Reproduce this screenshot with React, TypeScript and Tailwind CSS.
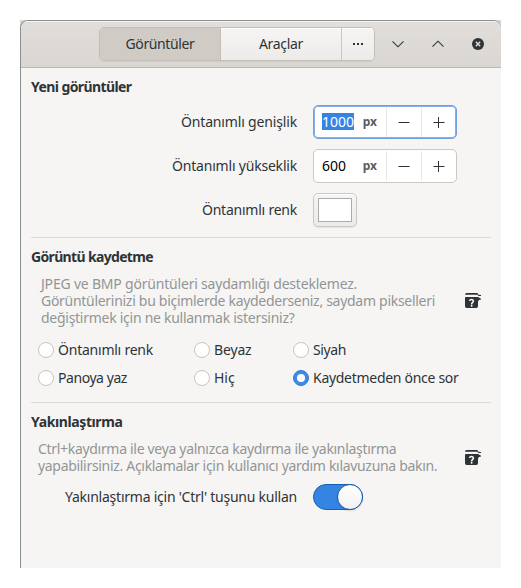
import type { ReactNode } from "react";

function HelpIcon({ className = "" }: { className?: string }) {
  return (
    <svg width="16" height="16" viewBox="0 0 16 16" className={"shrink-0 " + className}>
      <path d="M0 1.8Q0 0 1.6 0H12.4L13.4 1.7 16 2V3H13.4L12.4 1.7H1.4Z" fill="#2e3436" />
      <path d="M0 4.1Q.7 4.3 1.5 4.1H13L16 5.8V6.4L14 7 13 8.5V13.2Q13 15 11.3 15H1.7Q0 15 0 13.2Z" fill="#2e3436" />
      <path d="M4.6 8Q4.8 6.5 6.5 6.5T8.4 8.1Q8.4 9 7.4 9.7 6.6 10.2 6.6 11.4" fill="none" stroke="#f6f5f4" strokeWidth="1.6" />
      <rect x="5.8" y="12" width="1.6" height="1.7" fill="#f6f5f4" />
    </svg>
  );
}

function SpinButton({ value, active = false }: { value: string; active?: boolean }) {
  return (
    <div
      className={
        "flex h-[34px] w-36 overflow-hidden rounded-[5px] border bg-white " +
        (active ? "border-[#71a1dc] shadow-[inset_0_0_0_1px_#86b1e8]" : "border-[#cdc7c2]")
      }
    >
      <div className="flex w-[72px] items-center justify-between pr-[9px] pb-px pl-2">
        <span className={active ? "h-[17px] bg-[#3584e4] leading-[17px] text-white" : "leading-[17px] text-black"}>
          {value}
        </span>
        <span className="text-[12px] leading-[17px] font-bold text-[#585c5e]">px</span>
      </div>
      <div className="my-px flex w-[35px] items-center justify-center border-l border-[#eae8e6]">
        <svg width="12" height="12" viewBox="0 0 12 12"><path d="M0.5 6.5H11.5" stroke="#2e3436" /></svg>
      </div>
      <div className="my-px flex w-[35px] items-center justify-center border-l border-[#eae8e6]">
        <svg width="12" height="12" viewBox="0 0 12 12"><path d="M0.5 6.5H11.5M5.5 1V12" stroke="#2e3436" /></svg>
      </div>
    </div>
  );
}

function Radio({ checked = false, className, children }: { checked?: boolean; className: string; children: ReactNode }) {
  return (
    <div className={"flex h-4 items-center gap-1 " + className}>
      {checked ? (
        <span className="flex size-4 shrink-0 items-center justify-center rounded-full border border-[#2f7bd8] bg-[#3d8ae8]">
          <span className="size-2 rounded-full bg-white" />
        </span>
      ) : (
        <span className="size-4 shrink-0 rounded-full border border-[#c9c3bd] bg-white" />
      )}
      <span className="pb-px whitespace-nowrap">{children}</span>
    </div>
  );
}

function Row({ label, className, children }: { label: string; className: string; children: ReactNode }) {
  return (
    <div className="flex h-[34px] items-center gap-4">
      <span className={"flex w-[266px] justify-end pb-px whitespace-nowrap " + className}>{label}</span>
      {children}
    </div>
  );
}

export default function App() {
  return (
    <div className="h-[588px] w-[521px] bg-white pt-5 pl-5 font-['Noto_Sans','Open_Sans',sans-serif] text-[14px] leading-[17px] text-[#2e3436]">
      <div className="h-[548px] w-[481px] bg-[#d5d5d5]">
        <div className="flex h-full flex-col overflow-hidden rounded-t-[8px] border-t border-l border-[#8b8e8f] bg-[#f6f5f4]">
          <header className="flex h-[47px] shrink-0 border-b border-[#bfb8b1] bg-linear-to-b from-[#e1dedb] to-[#dad6d2] pt-1.5 pl-[78px] shadow-[inset_0_1px_#f6f5f4]">
            <div className="flex h-[34px] w-[276px] overflow-hidden rounded-[5px] border border-[#c4beb8] shadow-[0_1px_1px_#0000000d]">
              <div className="flex w-[121px] items-center justify-center border-r border-[#c4beb8] bg-[#d0cbc5] pb-px tracking-[-0.37px]">Görüntüler</div>
              <div className="flex w-[121px] items-center justify-center border-r border-[#cdc7c2] bg-linear-to-b from-[#f6f5f4] to-[#edebe9] pb-px tracking-[-0.32px] shadow-[inset_0_1px_white]">Araçlar</div>
              <div className="flex flex-1 items-center justify-center bg-linear-to-b from-[#f6f5f4] to-[#edebe9] shadow-[inset_0_1px_white]">
                <svg width="12" height="4" viewBox="0 0 12 4"><path d="M1 1h2v2H1zM5 1h2v2H5zM9 1h2v2H9z" fill="#2e3436" /></svg>
              </div>
            </div>
            <div className="flex h-[34px] items-center gap-6 pl-[15px]">
              <svg width="16" height="16" viewBox="0 0 16 16" fill="none" stroke="#2e3436" strokeWidth="1.1"><path d="M2.5 5.3 8 10.8 13.5 5.3" /></svg>
              <svg width="16" height="16" viewBox="0 0 16 16" fill="none" stroke="#2e3436" strokeWidth="1.1"><path d="M2.5 10.7 8 5.2 13.5 10.7" /></svg>
              <svg width="16" height="16" viewBox="0 0 16 16" fill="none"><circle cx="8" cy="8" r="6" fill="#2e3436" /><path d="m5.8 5.8 4.4 4.4m0-4.4-4.4 4.4" stroke="#e6e3e0" strokeWidth="1.3" /></svg>
            </div>
          </header>

          <main className="flex flex-col px-[10px] pt-[10px]">
            <h2 className="font-bold tracking-[-0.59px]">Yeni görüntüler</h2>
            <div className="mt-[10px] flex flex-col gap-2.5">
              <Row label="Öntanımlı genişlik" className="tracking-[-0.16px]"><SpinButton value="1000" active /></Row>
              <Row label="Öntanımlı yükseklik" className="tracking-[-0.2px]"><SpinButton value="600" /></Row>
              <Row label="Öntanımlı renk" className="tracking-[-0.23px]">
                <div className="h-[34px] w-11 rounded-[5px] border border-[#cdc7c2] bg-linear-to-b from-[#f6f5f4] to-[#edebe9] p-1 shadow-[0_1px_1px_#00000012,inset_0_1px_white]">
                  <div className="h-full w-full border border-[#acabaa] bg-white" />
                </div>
              </Row>
            </div>

            <hr className="mt-2.5 border-[#dcdad8]" />

            <h2 className="mt-[10px] font-bold tracking-[-0.66px]">Görüntü kaydetme</h2>
            <div className="mt-[10px] flex items-center justify-between px-[10px] whitespace-nowrap text-[#929595]">
              <p>
                <span className="block tracking-[-0.2px]">JPEG ve BMP görüntüleri saydamlığı desteklemez.</span>
                <span className="block tracking-[-0.29px]">Görüntülerinizi bu biçimlerde kaydederseniz, saydam pikselleri</span>
                <span className="block tracking-[-0.27px]">değiştirmek için ne kullanmak istersiniz?</span>
              </p>
              <HelpIcon />
            </div>
            <div className="mt-4 grid grid-cols-[156px_99px_auto] gap-y-3 pl-[7px]">
              <Radio className="tracking-[-0.23px]">Öntanımlı renk</Radio>
              <Radio className="tracking-[-0.16px]">Beyaz</Radio>
              <Radio className="tracking-[-0.39px]">Siyah</Radio>
              <Radio className="tracking-[-0.44px]">Panoya yaz</Radio>
              <Radio className="tracking-normal">Hiç</Radio>
              <Radio className="tracking-[-0.29px]" checked>Kaydetmeden önce sor</Radio>
            </div>

            <hr className="mt-4 border-[#dcdad8]" />

            <h2 className="mt-[10px] font-bold tracking-[-0.39px]">Yakınlaştırma</h2>
            <div className="mt-[10px] flex items-center justify-between pr-[10px] pl-[7px] whitespace-nowrap text-[#929595]">
              <p>
                <span className="block tracking-[-0.31px]">Ctrl+kaydırma ile veya yalnızca kaydırma ile yakınlaştırma</span>
                <span className="block tracking-[-0.31px]">yapabilirsiniz. Açıklamalar için kullanıcı yardım kılavuzuna bakın.</span>
              </p>
              <HelpIcon className="mt-0.5" />
            </div>
            <div className="mt-[6px]">
              <Row label="Yakınlaştırma için 'Ctrl' tuşunu kullan" className="tracking-[-0.24px]">
                <div className="flex h-[26px] w-[50px] justify-end rounded-full border border-[#185fb4] bg-[#3584e4]">
                  <div className="-m-px size-[26px] rounded-full border border-[#185fb4] bg-linear-to-b from-white to-[#f3f2f1] shadow-[0_1px_2px_#00000020]" />
                </div>
              </Row>
            </div>
          </main>
        </div>
      </div>
    </div>
  );
}
